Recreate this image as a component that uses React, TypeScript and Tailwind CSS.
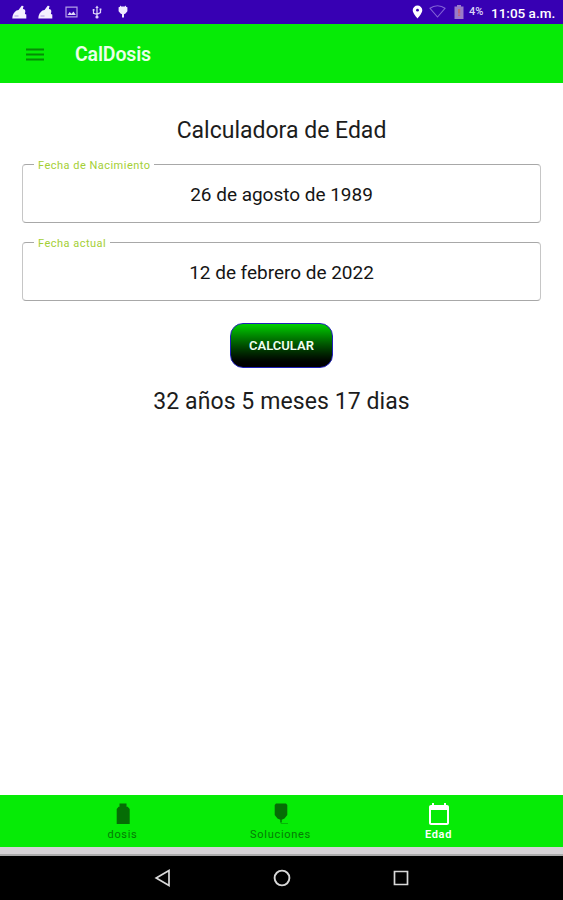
import type { ReactNode } from "react";

function FruitIcon() {
  return (
    <svg className="h-[14px] w-[15px]" viewBox="0 0 15 14" fill="#f4f0ff">
      <path d="M.3 13.500C.3 10 2 7.500 4.500 5.600l2-.7L9.700.8l1.800.2-.6 3c2 .2 2.800 1.300 2.300 3.300l-.3 1.700 1.400.6v3.900z" />
      <path d="M2.500 11h4" stroke="#8f72dc" strokeWidth=".7" />
    </svg>
  );
}

function StatusBar() {
  return (
    <div className="flex h-[23.5px] shrink-0 items-center bg-[#3700b3] pl-[12px] pr-[8px] text-white">
      <div className="flex items-center">
        <FruitIcon />
        <div className="ml-[11px] flex"><FruitIcon /></div>
        <svg className="ml-[12px] h-[12px] w-[13px]" viewBox="0 0 13 12">
          <path d="M1 1.2h11v9.600H1z" fill="none" stroke="#b3a0e8" strokeWidth="1.2" />
          <path d="M2.500 9l2.200-3 1.800 1.800 2-2.300L10.800 9z" fill="#e3dbfa" />
        </svg>
        <svg className="ml-[14px] h-[14px] w-[10px]" viewBox="0 0 10 14" fill="none" stroke="#ddd3fa" strokeWidth="1.2">
          <path d="M5 2v10M1.500 5v3.200L5 9.400l3.500-1.800V4.500" />
          <path d="M3.300 3L5 .5 6.700 3zM.7 4h1.800v1.800H.7zM7.600 3.500h1.800v1.800H7.600z" fill="#ddd3fa" stroke="none" />
          <circle cx="5" cy="12" r="1.6" fill="#ddd3fa" stroke="none" />
        </svg>
        <svg className="ml-[16px] h-[13px] w-[10px]" viewBox="0 0 10 13" fill="#efeaff">
          <path d="M2 .6l1.300 1h3.400l1.300-1v1.200l1.400.5v4L7.500 8.500 6 9.200v3.200H4V9.200l-1.500-.7L.6 6.300V2.300L2 1.800z" />
        </svg>
      </div>
      <div className="ml-auto flex items-center">
        <svg className="h-[14px] w-[11px]" viewBox="0 0 11 14">
          <path d="M5.500.5A4.800 4.800 0 0 0 .7 5.300C.7 8.400 5.500 13.500 5.500 13.500S10.300 8.400 10.300 5.300A4.800 4.800 0 0 0 5.500.5z" fill="#fff" />
          <circle cx="5.500" cy="5.200" r="1.400" fill="#3700b3" />
        </svg>
        <svg className="ml-[6px] h-[13px] w-[17px]" viewBox="0 0 17 13" fill="none" stroke="#8262d6" strokeWidth="1.100">
          <path d="M1 3.300C5.300-.2 11.700-.2 16 3.300L8.500 12z" />
        </svg>
        <svg className="ml-[8px] h-[14px] w-[10px]" viewBox="0 0 10 14">
          <path d="M3 0h4v1.500h2.500V14h-9V1.500H3z" fill="#9a7bc8" />
          <path d="M4 4h2.200v4.500H4zM4 9.500h2.200V11H4z" fill="#c0657f" />
        </svg>
        <span className="ml-[5px] w-[16px] whitespace-nowrap text-[11px] font-medium leading-[24px] text-[#ddd5f7]">4%</span>
        <span className="ml-[6px] w-[64px] whitespace-nowrap pt-[2px] text-[13.5px] font-medium leading-[24px]">11:05 a.m.</span>
      </div>
    </div>
  );
}

function DateField({ label, value }: { label: string; value: string }) {
  return (
    <div className="relative flex h-[59px] items-center justify-center rounded-[4px] border border-x-[#c6c6c6] border-y-[#a8a8a8] pt-[2px]">
      <span className="absolute left-[11px] top-[-6px] bg-white px-[4px] text-[11px] leading-[14px] tracking-[0.48px] text-[#a4cf35]">{label}</span>
      <span className="text-[19px] leading-6 tracking-[-0.02px] text-[#151515]">{value}</span>
    </div>
  );
}

function NavItem({ label, active = false, children }: { label: string; active?: boolean; children: ReactNode }) {
  return (
    <button className={`flex w-[158px] flex-col items-center pt-[7px] ${active ? "text-white" : "text-[#057a05]"}`}>
      <svg className="h-[24px] w-[24px]" viewBox="0 0 24 24">{children}</svg>
      <span className={`pt-px text-[11px] leading-[16px] tracking-[0.7px] ${active ? "font-semibold" : "font-normal"}`}>{label}</span>
    </button>
  );
}

export default function App() {
  return (
    <div className="flex h-[900px] w-[563px] flex-col overflow-hidden bg-white font-['Roboto',sans-serif]">
      <StatusBar />
      <header className="flex h-[59.5px] shrink-0 items-center bg-[#06eb06] pl-[26px] pt-[3px]">
        <svg className="h-[13px] w-[18px]" viewBox="0 0 18 13" stroke="#058c05" strokeWidth="1.8">
          <path d="M0 1.500h18M0 6.500h18M0 11.500h18" />
        </svg>
        <h1 className="ml-[31px] text-[19.5px] font-semibold leading-6 tracking-[-0.15px] text-[#eaffea]">CalDosis</h1>
      </header>
      <main className="flex flex-1 flex-col px-[22px] pt-[34px]">
        <h2 className="text-center text-[23px] leading-[28px] text-[#1c1c1c]">Calculadora de Edad</h2>
        <div className="mt-[19px] flex flex-col gap-[19px]">
          <DateField label="Fecha de Nacimiento" value="26 de agosto de 1989" />
          <DateField label="Fecha actual" value="12 de febrero de 2022" />
        </div>
        <button className="mt-[22px] h-[45px] w-[103px] self-center rounded-[13px] border border-[#2020b8] bg-linear-to-b from-[#00d000] to-black text-[13px] font-semibold text-[#f0fff0]">CALCULAR</button>
        <p className="mt-[20px] text-center text-[23px] leading-[28px] tracking-[0.08px] text-[#1c1c1c]">32 años 5 meses 17 dias</p>
      </main>
      <nav className="flex h-[52px] shrink-0 items-start justify-center bg-[#06eb06] pr-[2px]">
        <NavItem label="dosis">
          <path d="M8.500 1.500h7v3.300h1.200l2 2.200v15H5.700V7l1.900-2.200h.9z" fill="#056d05" />
        </NavItem>
        <NavItem label="Soluciones">
          <path d="M7 1.500h10l1.300 1.500v10l-2.800 3.500-2.800 1.300v2.700h-1.400v-2.700l-2.800-1.300L5.700 13V3z" fill="#056d05" />
          <path d="M12 20v1.500h7" fill="none" stroke="#07b407" />
        </NavItem>
        <NavItem label="Edad" active>
          <path d="M20 3h-1V1h-2v2H7V1H5v2H4c-1.100 0-2 .9-2 2v16c0 1.100.9 2 2 2h16c1.100 0 2-.9 2-2V5c0-1.100-.9-2-2-2zm0 18H4V8h16v13z" fill="currentColor" />
        </NavItem>
      </nav>
      <div className="h-[9px] shrink-0 border-b-2 border-[#aaa] bg-[#d5d2d5]" />
      <footer className="flex h-[44px] shrink-0 items-center justify-center gap-[101px] bg-black">
        <svg className="h-[18px] w-[18px]" viewBox="0 0 18 18" fill="none" stroke="#d8d8d8" strokeWidth="1.7">
          <path d="M15 1.500v15L2.200 9z" />
        </svg>
        <svg className="h-[18px] w-[18px]" viewBox="0 0 18 18" fill="none" stroke="#d8d8d8" strokeWidth="1.900">
          <circle cx="9" cy="9" r="7.400" />
        </svg>
        <svg className="h-[18px] w-[18px]" viewBox="0 0 18 18" fill="none" stroke="#d8d8d8" strokeWidth="1.7">
          <path d="M2.500 2.500h13v13h-13z" />
        </svg>
      </footer>
    </div>
  );
}
